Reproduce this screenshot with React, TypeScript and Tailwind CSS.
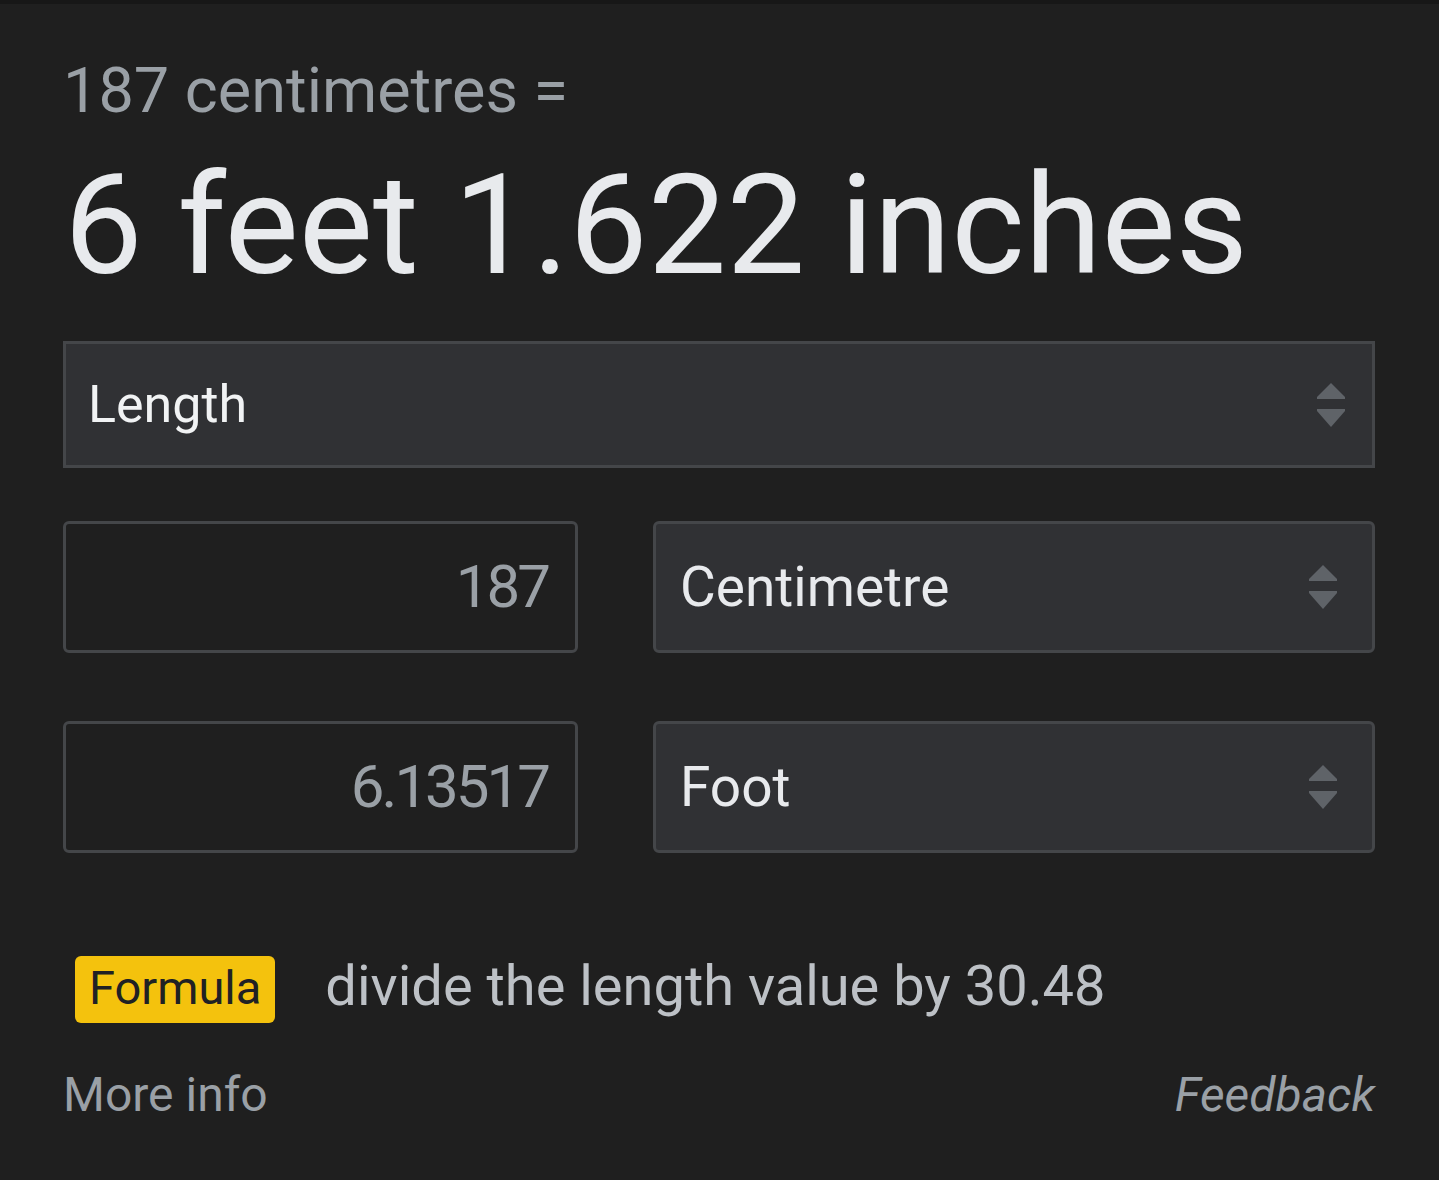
const ROWS = [
  { value: '187', unit: 'Centimetre' },
  { value: '6.13517', unit: 'Foot' },
];

function Arrows() {
  return (
    <svg className="h-[44px] w-[28px] text-[#5f6368]" viewBox="0 0 28 44" fill="currentColor">
      <polygon points="14,0 28,14 28,16 0,16 0,14" />
      <polygon points="0,26 28,26 28,28 14,44 0,28" />
    </svg>
  );
}

export default function App() {
  return (
    <div className="min-h-[1180px] border-t-4 border-[#171717] bg-[#1f1f1f] pl-[63px] pr-[64px] font-['Roboto',sans-serif]">
      <p className="pt-[55px] text-[63px] leading-none text-[#9aa0a6]">187 centimetres =</p>
      <h1 className="mt-[33px] pl-[1px] text-[140px] leading-none text-[#e8eaed]">6 feet 1.622 inches</h1>

      <div className="mt-[46px] flex h-[127px] items-center justify-between border-[3px] border-[#444649] bg-[#303134] pl-[22px] pr-[27px]">
        <span className="text-[52px] leading-none text-[#f1f3f4]">Length</span>
        <Arrows />
      </div>

      <div className="mt-[53px] flex flex-col gap-[68px]">
        {ROWS.map((r) => (
          <div key={r.unit} className="flex gap-[75px]">
            <div className="flex h-[132px] w-[515px] items-center justify-end rounded-[6px] border-[3px] border-[#444649] pr-[27px]">
              <span className="text-[60px] leading-none tracking-[-0.05em] text-[#9aa0a6]">{r.value}</span>
            </div>
            <div className="flex h-[132px] flex-1 items-center justify-between rounded-[6px] border-[3px] border-[#444649] bg-[#303134] pl-[24px] pr-[35px]">
              <span className="text-[55px] leading-none text-[#e8eaed]">{r.unit}</span>
              <Arrows />
            </div>
          </div>
        ))}
      </div>

      <div className="mt-[103px] flex items-center gap-[50px] pl-[12px]">
        <span className="flex h-[67px] items-center rounded-[6px] bg-[#f4c20d] px-[14px] pb-[4px] text-[47px] leading-none text-[#202124]">
          Formula
        </span>
        <span className="-mt-[8px] text-[56px] leading-none text-[#bdc1c6]">divide the length value by 30.48</span>
      </div>

      <div className="mt-[48px] flex items-center justify-between">
        <span className="text-[48px] leading-none text-[#9aa0a6]">More info</span>
        <span className="text-[48px] italic leading-none text-[#9aa0a6]">Feedback</span>
      </div>
    </div>
  );
}
